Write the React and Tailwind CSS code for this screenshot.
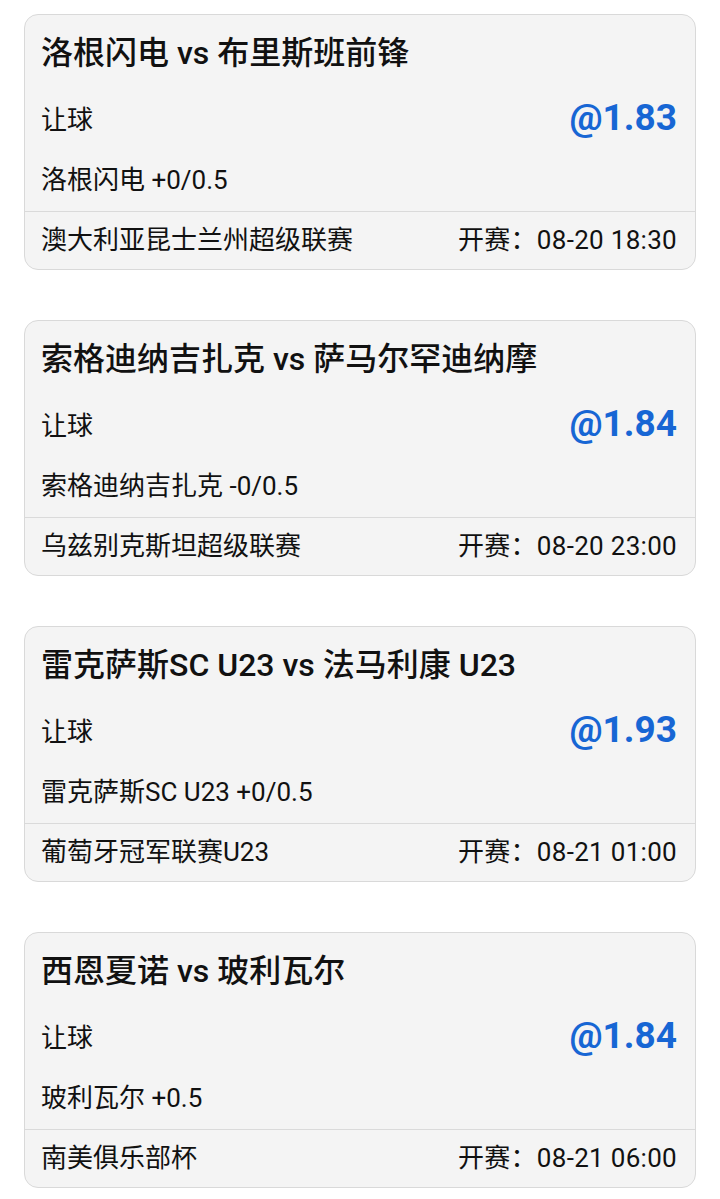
const matches = [
  {
    title: '洛根闪电 vs 布里斯班前锋',
    market: '让球',
    odds: '@1.83',
    pick: '洛根闪电 +0/0.5',
    league: '澳大利亚昆士兰州超级联赛',
    time: '08-20 18:30',
  },
  {
    title: '索格迪纳吉扎克 vs 萨马尔罕迪纳摩',
    market: '让球',
    odds: '@1.84',
    pick: '索格迪纳吉扎克 -0/0.5',
    league: '乌兹别克斯坦超级联赛',
    time: '08-20 23:00',
  },
  {
    title: '雷克萨斯SC U23 vs 法马利康 U23',
    market: '让球',
    odds: '@1.93',
    pick: '雷克萨斯SC U23 +0/0.5',
    league: '葡萄牙冠军联赛U23',
    time: '08-21 01:00',
  },
  {
    title: '西恩夏诺 vs 玻利瓦尔',
    market: '让球',
    odds: '@1.84',
    pick: '玻利瓦尔 +0.5',
    league: '南美俱乐部杯',
    time: '08-21 06:00',
  },
];

const MatchCard = ({ match }) => (
  <div className="rounded-[14px] border border-[#d9d9d9] bg-[#f4f4f4] text-[#111]">
    <div className="flex h-[75px] items-center pl-4 pr-[18px] text-[32px] font-medium">
      {match.title}
    </div>
    <div className="flex h-[60px] items-center justify-between pl-4 pr-[18px]">
      <span className="text-[26px]">{match.market}</span>
      <span className="-mt-1 text-[37px] font-bold text-[#1766d4]">{match.odds}</span>
    </div>
    <div className="flex h-[61px] items-center pl-4 pr-[18px] text-[26px]">
      {match.pick}
    </div>
    <div className="flex h-[58px] items-center justify-between border-t border-[#dadada] pl-4 pr-[18px] text-[26px]">
      <span>{match.league}</span>
      <span className="tracking-[0.3px]">开赛：{match.time}</span>
    </div>
  </div>
);

export default function App() {
  return (
    <div
      className="min-h-screen bg-white px-6 pt-[14px] pb-3"
      style={{ fontFamily: 'Roboto, "Noto Sans CJK SC", sans-serif' }}
    >
      <div className="flex flex-col gap-[50px]">
        {matches.map((m, i) => (
          <MatchCard key={i} match={m} />
        ))}
      </div>
    </div>
  );
}
